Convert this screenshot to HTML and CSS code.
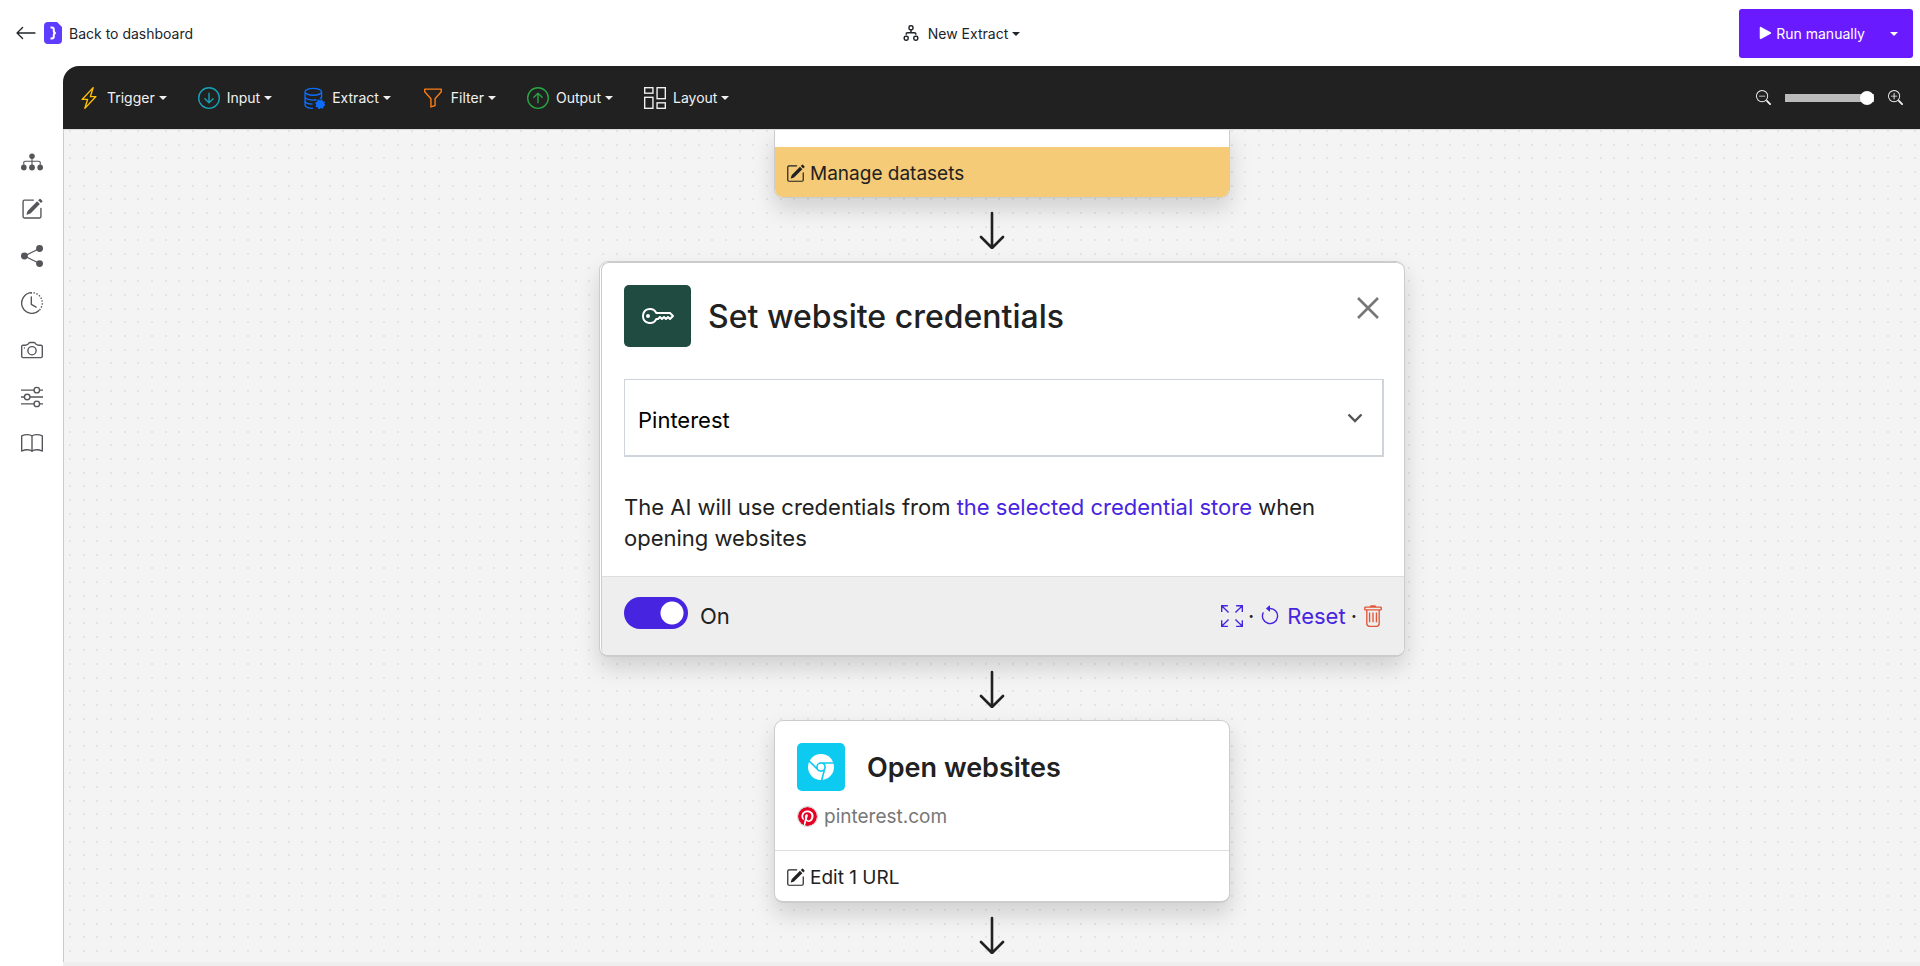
FILE: index.html
```html
<!DOCTYPE html>
<html lang="en">
<head>
    <meta charset="UTF-8">
    <meta name="viewport" content="width=device-width, initial-scale=1.0">
    <title>New Extract</title>
    <link rel="stylesheet" href="styles.css">
</head>
<body>
    <!-- Icon sprite -->
    <svg class="sprite" aria-hidden="true">
        <symbol id="i-back" viewBox="0 0 16 16"><path d="M15 8a.5.5 0 0 0-.5-.5H2.707l3.147-3.146a.5.5 0 1 0-.708-.708l-4 4a.5.5 0 0 0 0 .708l4 4a.5.5 0 0 0 .708-.708L2.707 8.5H14.5A.5.5 0 0 0 15 8"/></symbol>
        <symbol id="i-pencil" viewBox="0 0 16 16"><path d="M15.502 1.94a.5.5 0 0 1 0 .706L14.459 3.69l-2-2L13.502.646a.5.5 0 0 1 .707 0l1.293 1.293zm-1.75 2.456-2-2L4.939 9.21a.5.5 0 0 0-.121.196l-.805 2.414a.25.25 0 0 0 .316.316l2.414-.805a.5.5 0 0 0 .196-.12l6.813-6.814z"/><path d="M1 13.5A1.5 1.5 0 0 0 2.5 15h11a1.5 1.5 0 0 0 1.5-1.5v-6a.5.5 0 0 0-1 0v6a.5.5 0 0 1-.5.5h-11a.5.5 0 0 1-.5-.5v-11a.5.5 0 0 1 .5-.5H9a.5.5 0 0 0 0-1H2.5A1.5 1.5 0 0 0 1 2.5z"/></symbol>
        <symbol id="i-lightning" viewBox="0 0 16 16"><path d="M11.251.068a.5.5 0 0 1 .227.58L9.677 6.5H13a.5.5 0 0 1 .364.843l-8 8.5a.5.5 0 0 1-.842-.49L6.323 9.5H3a.5.5 0 0 1-.364-.843l8-8.5a.5.5 0 0 1 .615-.09zM4.157 8.5H7a.5.5 0 0 1 .478.647L6.11 13.59l5.732-6.09H9a.5.5 0 0 1-.478-.647L9.89 2.41z"/></symbol>
        <symbol id="i-down-circle" viewBox="0 0 16 16"><path d="M1 8a7 7 0 1 0 14 0A7 7 0 0 0 1 8m15 0A8 8 0 1 1 0 8a8 8 0 0 1 16 0M8.5 4.5a.5.5 0 0 0-1 0v5.793L5.354 8.146a.5.5 0 1 0-.708.708l3 3a.5.5 0 0 0 .708 0l3-3a.5.5 0 0 0-.708-.708L8.5 10.293z"/></symbol>
        <symbol id="i-up-circle" viewBox="0 0 16 16"><path d="M1 8a7 7 0 1 0 14 0A7 7 0 0 0 1 8m15 0A8 8 0 1 1 0 8a8 8 0 0 1 16 0M8.5 11.5a.5.5 0 0 1-1 0V5.707L5.354 7.854a.5.5 0 1 1-.708-.708l3-3a.5.5 0 0 1 .708 0l3 3a.5.5 0 0 1-.708.708L8.5 5.707z"/></symbol>
        <symbol id="i-database" viewBox="0 0 16 16"><g fill="none" stroke="currentColor"><path d="M13.500 4v4M1.500 4v9c0 1.300 2.500 2.300 5.800 2.500M1.500 7c0 1.400 2.700 2.500 6 2.500.8 0 1.600-.1 2.300-.2M1.500 10c0 1.400 2.500 2.400 5.500 2.500M13.500 7c0 .6-.5 1.100-1.200 1.500"/><ellipse cx="7.500" cy="3.500" rx="6" ry="2.500"/></g><circle cx="12.500" cy="12.500" r="2.900"/><circle cx="12.500" cy="12.500" r="3" fill="none" stroke="currentColor" stroke-width="1.200" stroke-dasharray="1.180 1.180"/></symbol>
        <symbol id="i-funnel" viewBox="0 0 16 16"><path d="M1.500 1.500A.5.5 0 0 1 2 1h12a.5.5 0 0 1 .5.5v2a.5.5 0 0 1-.128.334L10 8.692V13.500a.5.5 0 0 1-.342.474l-3 1A.5.5 0 0 1 6 14.500V8.692L1.628 3.834A.5.5 0 0 1 1.500 3.500zm1 .5v1.308l4.372 4.858A.5.5 0 0 1 7 8.500v5.306l2-.666V8.500a.5.5 0 0 1 .128-.334L13.500 3.308V2z"/></symbol>
        <symbol id="i-layout" viewBox="0 0 16 16"><g fill="none" stroke="currentColor"><rect x=".5" y=".5" width="6" height="4"/><rect x="9.500" y=".5" width="6" height="8"/><rect x=".5" y="7.500" width="6" height="8"/><rect x="9.500" y="11.500" width="6" height="4"/></g></symbol>
        <symbol id="i-flow" viewBox="0 0 16 16"><g fill="none" stroke="currentColor" stroke-width="1.500"><rect x="6" y=".8" width="4" height="4" rx="1.600"/><path d="M8 4.800v3M3.200 9.800V9a1.200 1.200 0 0 1 1.200-1.200h7.200A1.200 1.200 0 0 1 12.800 9v.8"/><rect x="1.200" y="11.200" width="4" height="4" rx="1.600"/><rect x="10.800" y="11.200" width="4" height="4" rx="1.600"/></g></symbol>
        <symbol id="i-play" viewBox="0 0 16 16"><path d="M2 1.900v12.200c0 .8.8 1.200 1.500.8l11-6.100a.9.9 0 0 0 0-1.600L3.500 1.100c-.7-.4-1.500 0-1.500.8z"/></symbol>
        <symbol id="i-zoom-out" viewBox="0 0 16 16"><path d="M6.500 12a5.500 5.500 0 1 0 0-11 5.500 5.500 0 0 0 0 11M13 6.500a6.500 6.500 0 1 1-13 0 6.500 6.500 0 0 1 13 0"/><path d="M10.344 11.742q.044.060.098.115l3.850 3.850a1 1 0 0 0 1.415-1.414l-3.850-3.850a1 1 0 0 0-.115-.1 6.500 6.500 0 0 1-1.398 1.400zM3.500 6h6a.5.5 0 0 1 0 1h-6a.5.5 0 0 1 0-1"/></symbol>
        <symbol id="i-zoom-in" viewBox="0 0 16 16"><path d="M6.500 12a5.500 5.500 0 1 0 0-11 5.500 5.500 0 0 0 0 11M13 6.500a6.500 6.500 0 1 1-13 0 6.500 6.500 0 0 1 13 0"/><path d="M10.344 11.742q.044.060.098.115l3.850 3.850a1 1 0 0 0 1.415-1.414l-3.850-3.850a1 1 0 0 0-.115-.1 6.500 6.500 0 0 1-1.398 1.400zM6.500 3a.5.5 0 0 1 .5.5V6h2.500a.5.5 0 0 1 0 1H7v2.500a.5.5 0 0 1-1 0V7H3.500a.5.5 0 0 1 0-1H6V3.500a.5.5 0 0 1 .5-.5"/></symbol>
        <symbol id="i-sitemap" viewBox="0 0 16 16"><circle cx="8" cy="3.800" r="2"/><circle cx="2" cy="12" r="2.100"/><circle cx="8" cy="12" r="2.100"/><circle cx="14" cy="12" r="2.100"/><path d="M8 4v8M2 10V8.500A1 1 0 0 1 3 7.500h10a1 1 0 0 1 1 1V10" fill="none" stroke="currentColor" stroke-width=".8"/></symbol>
        <symbol id="i-share" viewBox="0 0 16 16"><circle cx="13.500" cy="2.500" r="2.500"/><circle cx="2.500" cy="8" r="2.500"/><circle cx="13.500" cy="13.500" r="2.500"/><path d="M13.500 2.500 2.500 8l11 5.500" fill="none" stroke="currentColor" stroke-width=".9"/></symbol>
        <symbol id="i-clock" viewBox="0 0 16 16"><g fill="none" stroke="currentColor"><path d="M8 .5a7.500 7.500 0 1 0 5.300 12.800"/><path d="M8 .5a7.500 7.500 0 0 1 5.300 12.800" stroke-dasharray="1 1.150" stroke-dashoffset="-1.100"/><path d="M7.500 3.500V9l3.500 2" stroke-linecap="round" stroke-linejoin="round"/></g></symbol>
        <symbol id="i-camera" viewBox="0 0 16 16"><g fill="none" stroke="currentColor"><path d="M15.500 12.500a1 1 0 0 1-1 1h-13a1 1 0 0 1-1-1v-7a1 1 0 0 1 1-1h1.700c.7 0 1.300-.3 1.800-.7l.8-.9c.2-.2.400-.4.700-.4h3c.3 0 .5.200.7.400l.8.9c.5.400 1.100.7 1.800.7h1.700a1 1 0 0 1 1 1z"/><circle cx="8" cy="8.500" r="3"/></g><circle cx="2.500" cy="6.500" r=".5"/></symbol>
        <symbol id="i-sliders" viewBox="0 0 16 16"><g fill="none" stroke="currentColor"><path d="M0 3h9.500M13.500 3H16M0 8h2.500M6.500 8H16M0 13h9.500M13.500 13H16"/><circle cx="11.500" cy="3" r="2"/><circle cx="4.500" cy="8" r="2"/><circle cx="11.500" cy="13" r="2"/></g></symbol>
        <symbol id="i-book" viewBox="0 0 16 16"><path d="M8 2.200v11M8 2.200C6.500.7 3 1 .5 2.100v11c2.500-1.100 6-1.400 7.500.1 1.500-1.500 5-1.200 7.500-.1v-11C13 1 9.500.7 8 2.200z" fill="none" stroke="currentColor" stroke-linejoin="round"/></symbol>
        <symbol id="i-key" viewBox="0 0 16 16"><path d="M0 8a4 4 0 0 1 7.465-2H14a.5.5 0 0 1 .354.146l1.500 1.500a.5.5 0 0 1 0 .708l-1.500 1.500a.5.5 0 0 1-.708 0L13 9.207l-.646.647a.5.5 0 0 1-.708 0L11 9.207l-.646.647a.5.5 0 0 1-.708 0L9 9.207l-.646.647A.5.5 0 0 1 8 10h-.535A4 4 0 0 1 0 8m4-3a3 3 0 1 0 2.712 4.285A.5.5 0 0 1 7.163 9h.63l.853-.854a.5.5 0 0 1 .708 0l.646.647.646-.647a.5.5 0 0 1 .708 0l.646.647.646-.647a.5.5 0 0 1 .708 0l.646.647.793-.793-1-1h-6.630a.5.5 0 0 1-.451-.285A3 3 0 0 0 4 5"/><path d="M4 8a1 1 0 1 1-2 0 1 1 0 0 1 2 0"/></symbol>
        <symbol id="i-expand" viewBox="0 0 16 16"><path d="M.5 5V.5H5M.5.5l5 5M11 .5h4.500V5M15.500.5l-5 5M.5 11v4.500H5M.5 15.500l5-5M11 15.500h4.500V11M15.500 15.500l-5-5" fill="none" stroke="currentColor"/></symbol>
        <symbol id="i-reset" viewBox="0 0 16 16"><path d="M8 3a5 5 0 1 1-4.546 2.914.5.5 0 0 0-.908-.417A6 6 0 1 0 8 2z"/><path d="M8 4.466V.534a.25.25 0 0 0-.41-.192L5.230 2.308a.25.25 0 0 0 0 .384l2.360 1.966A.25.25 0 0 0 8 4.466"/></symbol>
        <symbol id="i-trash" viewBox="0 0 16 16"><g fill="none" stroke="currentColor"><path d="M2.500 1.500h11a.5.5 0 0 1 .5.5v1a.5.5 0 0 1-.5.5h-11A.5.5 0 0 1 2 3V2a.5.5 0 0 1 .5-.5zM6 1.500a.8.8 0 0 1 .8-.9h2.400a.8.8 0 0 1 .8.900M3.500 4v9.500a2 2 0 0 0 2 2h5a2 2 0 0 0 2-2V4M5.500 5.500v7M8 5.500v7M10.500 5.500v7"/></g></symbol>
        <symbol id="i-chrome" viewBox="0 0 16 16"><path d="M16 8a8 8 0 0 1-7.022 7.940l1.902-7.098a3 3 0 0 0 .05-1.492A3 3 0 0 0 10.237 6h5.511A8 8 0 0 1 16 8M0 8a8 8 0 0 0 7.927 8l1.426-5.321a3 3 0 0 1-.723.255 3 3 0 0 1-1.743-.147 3 3 0 0 1-1.043-.7L.633 4.876A8 8 0 0 0 0 8m5.004-.167L1.108 3.936A8.003 8.003 0 0 1 15.418 5H8.066a3 3 0 0 0-1.252.243 2.990 2.990 0 0 0-1.810 2.590M8 10a2 2 0 1 0 0-4 2 2 0 0 0 0 4"/></symbol>
        <symbol id="i-pinterest" viewBox="0 0 16 16"><path d="M8 0a8 8 0 0 0-2.915 15.452c-.07-.633-.134-1.606.027-2.297.146-.625.938-3.977.938-3.977s-.239-.479-.239-1.187c0-1.113.645-1.943 1.448-1.943.682 0 1.012.512 1.012 1.127 0 .686-.437 1.712-.663 2.663-.188.796.4 1.446 1.185 1.446 1.422 0 2.515-1.500 2.515-3.664 0-1.915-1.377-3.254-3.342-3.254-2.276 0-3.612 1.707-3.612 3.471 0 .688.265 1.425.595 1.826a.24.24 0 0 1 .056.230c-.061.252-.196.796-.222.907-.035.146-.116.177-.268.107-1-.465-1.624-1.926-1.624-3.100 0-2.523 1.834-4.840 5.286-4.840 2.775 0 4.932 1.977 4.932 4.620 0 2.757-1.739 4.976-4.151 4.976-.811 0-1.573-.421-1.834-.919l-.498 1.902c-.181.695-.669 1.566-.995 2.097A8 8 0 1 0 8 0"/></symbol>
        <symbol id="i-close" viewBox="0 0 22 22"><path d="M1 1l20 20M21 1 1 21" fill="none" stroke="currentColor" stroke-width="2.600"/></symbol>
        <symbol id="i-arrow" viewBox="0 0 26 38"><path d="M13 2V37M2 26l11 11 11-11" fill="none" stroke="currentColor" stroke-width="2.600" stroke-linecap="round" stroke-linejoin="round"/></symbol>
    </svg>

    <header class="topbar">
        <a class="back" href="#">
            <svg class="back-arrow"><use href="#i-back"/></svg>
            <svg class="logo" viewBox="0 0 18 22"><path d="M4 0h9l5 5v13a4 4 0 0 1-4 4H4a4 4 0 0 1-4-4V4a4 4 0 0 1 4-4z" fill="#5f3dff"/><path d="M6.500 5.500h1.300a2 2 0 0 1 2 2v1.500a2 2 0 0 0 2 2 2 2 0 0 0-2 2v1.500a2 2 0 0 1-2 2H6.500" fill="none" stroke="#fff" stroke-width="2"/></svg>
            Back to dashboard
        </a>
        <button class="title-menu"><svg class="icon-16"><use href="#i-flow"/></svg><span class="caret">New Extract</span></button>
        <div class="run">
            <button class="run-main"><svg class="run-icon"><use href="#i-play"/></svg>Run manually</button>
            <button class="run-more caret" aria-label="More run options"></button>
        </div>
    </header>

    <div class="workspace">
        <nav class="sidebar">
            <a href="#" aria-label="Workflow"><svg><use href="#i-sitemap"/></svg></a>
            <a href="#" aria-label="Edit"><svg><use href="#i-pencil"/></svg></a>
            <a href="#" aria-label="Share"><svg><use href="#i-share"/></svg></a>
            <a href="#" aria-label="History"><svg><use href="#i-clock"/></svg></a>
            <a href="#" aria-label="Screenshots"><svg><use href="#i-camera"/></svg></a>
            <a href="#" aria-label="Settings"><svg><use href="#i-sliders"/></svg></a>
            <a href="#" aria-label="Docs"><svg><use href="#i-book"/></svg></a>
        </nav>

        <main class="editor">
            <div class="toolbar">
                <button class="tool"><svg class="yellow"><use href="#i-lightning"/></svg><span class="caret">Trigger</span></button>
                <button class="tool"><svg class="teal"><use href="#i-down-circle"/></svg><span class="caret">Input</span></button>
                <button class="tool"><svg class="blue"><use href="#i-database"/></svg><span class="caret">Extract</span></button>
                <button class="tool"><svg class="orange"><use href="#i-funnel"/></svg><span class="caret">Filter</span></button>
                <button class="tool"><svg class="green"><use href="#i-up-circle"/></svg><span class="caret">Output</span></button>
                <button class="tool"><svg><use href="#i-layout"/></svg><span class="caret">Layout</span></button>
                <div class="zoom">
                    <button aria-label="Zoom out"><svg><use href="#i-zoom-out"/></svg></button>
                    <input type="range" min="0" max="100" value="100" aria-label="Zoom">
                    <button aria-label="Zoom in"><svg><use href="#i-zoom-in"/></svg></button>
                </div>
            </div>

            <div class="canvas">
                <section class="card card-clipped">
                    <div class="card-spacer"></div>
                    <button class="card-action highlight"><svg><use href="#i-pencil"/></svg>Manage datasets</button>
                </section>

                <svg class="arrow"><use href="#i-arrow"/></svg>

                <section class="card card-active">
                    <div class="card-inner">
                        <div class="active-body">
                            <div class="active-head">
                                <span class="tile tile-key"><svg><use href="#i-key"/></svg></span>
                                <h2>Set website credentials</h2>
                                <button class="close" aria-label="Close"><svg><use href="#i-close"/></svg></button>
                            </div>
                            <select class="store" aria-label="Credential store">
                                <option>Pinterest</option>
                            </select>
                            <p>The AI will use credentials from <a href="#">the selected credential store</a> when opening websites</p>
                        </div>
                        <div class="active-foot">
                            <input class="switch" type="checkbox" id="enabled" checked>
                            <label for="enabled">On</label>
                            <div class="actions">
                                <a href="#" aria-label="Expand"><svg><use href="#i-expand"/></svg></a>
                                <span>·</span>
                                <a href="#"><svg><use href="#i-reset"/></svg>Reset</a>
                                <span>·</span>
                                <a class="danger" href="#" aria-label="Delete"><svg><use href="#i-trash"/></svg></a>
                            </div>
                        </div>
                    </div>
                </section>

                <svg class="arrow"><use href="#i-arrow"/></svg>

                <section class="card">
                    <div class="card-body">
                        <div class="card-head">
                            <span class="tile tile-chrome"><svg><use href="#i-chrome"/></svg></span>
                            <h3>Open websites</h3>
                        </div>
                        <div class="site"><svg><use href="#i-pinterest"/></svg>pinterest.com</div>
                    </div>
                    <button class="card-action"><svg><use href="#i-pencil"/></svg>Edit 1 URL</button>
                </section>

                <svg class="arrow"><use href="#i-arrow"/></svg>
            </div>
        </main>
    </div>
</body>
</html>
```

FILE: styles.css
```css
* {
    box-sizing: border-box;
}

body {
    font-family: Inter, "Liberation Sans", sans-serif;
    font-size: 14px;
    color: #212529;
    background: #fff;
    margin: 0;
    height: 100vh;
    display: flex;
    flex-direction: column;
    overflow: hidden;
}

button, select {
    font: inherit;
    color: inherit;
    background: none;
    border: 0;
    padding: 0;
    cursor: pointer;
}

a {
    color: #4725e0;
    text-decoration: none;
}

svg {
    display: block;
    flex: none;
    fill: currentColor;
}

.sprite {
    position: absolute;
    width: 0;
    height: 0;
}

.caret::after {
    content: "";
    display: inline-block;
    margin-left: 4px;
    vertical-align: 3px;
    border: 4px solid transparent;
    border-top-color: currentColor;
    border-bottom: 0;
}

/* Top bar */
.topbar {
    display: grid;
    grid-template-columns: 1fr auto 1fr;
    align-items: center;
    height: 66px;
    padding: 0 7px 0 15px;
    flex: none;
}

.back {
    display: flex;
    align-items: center;
    color: #212529;
}

.back-arrow {
    width: 22px;
    height: 22px;
}

.logo {
    width: 18px;
    height: 22px;
    margin: 0 7px;
}

.title-menu {
    display: flex;
    align-items: center;
    gap: 9px;
    padding-right: 5px;
}

.icon-16 {
    width: 16px;
    height: 16px;
}

.run {
    display: flex;
    justify-self: end;
    height: 49px;
    border-radius: 3px;
    background: #6a1aff;
    color: #fff;
}

.run-main {
    display: flex;
    align-items: center;
    gap: 4px;
    padding: 0 10px 0 19px;
}

.run-icon {
    width: 14px;
    height: 14px;
}

.run-more {
    width: 38px;
}

.run-more::after {
    margin-left: 0;
}

/* Workspace */
.workspace {
    display: flex;
    flex: 1;
    min-height: 0;
}

.sidebar {
    display: flex;
    flex-direction: column;
    align-items: center;
    gap: 25px;
    width: 64px;
    padding-top: 85px;
    margin-right: -1px;
    flex: none;
}

.sidebar a {
    color: #55565a;
}

.sidebar svg {
    width: 22px;
    height: 22px;
}

.editor {
    display: flex;
    flex-direction: column;
    flex: 1;
    min-width: 0;
    border-bottom: 4px solid #eee;
}

.toolbar {
    display: flex;
    align-items: center;
    gap: 31px;
    height: 63px;
    padding: 0 17px 0 15px;
    border-top-left-radius: 16px;
    background: #212121;
    color: #f1f1f1;
    flex: none;
}

.tool {
    display: flex;
    align-items: center;
    gap: 7px;
}

.tool svg {
    width: 22px;
    height: 22px;
}

.yellow { color: #ffc107; }
.teal { color: #17a2b8; }
.blue { color: #0d6efd; }
.orange { color: #fd7e14; }
.green { color: #28a745; }

.zoom {
    display: flex;
    align-items: center;
    gap: 14px;
    margin-left: auto;
}

.zoom svg {
    width: 15px;
    height: 15px;
}

.zoom input {
    appearance: none;
    width: 89px;
    height: 8px;
    margin: 0;
    background: #bbb;
}

.zoom input::-webkit-slider-thumb {
    appearance: none;
    width: 14px;
    height: 14px;
    border-radius: 50%;
    background: #fff;
}

/* Canvas with dotted grid */
.canvas {
    display: flex;
    flex-direction: column;
    align-items: center;
    flex: 1;
    min-height: 0;
    overflow: hidden;
    border-left: 1px solid #ccc;
    border-top: 1px solid #ddd;
    background: #f4f4f4 url("data:image/svg+xml,%3Csvg xmlns='http://www.w3.org/2000/svg' width='41' height='41' fill='%23e4e4e4'%3E%3Cpath d='M5 0h2v2H5zM19 0h2v2h-2zM32 0h2v2h-2zM5 14h2v2H5zM19 14h2v2h-2zM32 14h2v2h-2zM5 27h2v2H5zM19 27h2v2h-2zM32 27h2v2h-2z'/%3E%3C/svg%3E");
}

.arrow {
    width: 26px;
    height: 38px;
    margin: 13px 0 12px;
    color: #212121;
}

.card {
    width: 456px;
    margin-left: 20px;
    border: 1px solid #ccc;
    border-bottom-width: 2px;
    border-radius: 9px;
    background: #fff;
    box-shadow: 0 11px 22px rgba(0, 0, 0, 0.15);
    overflow: hidden;
    flex: none;
}

.card-clipped {
    border-top: 0;
    border-bottom-width: 1px;
    border-radius: 0 0 9px 9px;
}

.card-spacer {
    height: 17px;
}

.card-action {
    display: flex;
    align-items: center;
    gap: 5px;
    width: 100%;
    height: 51px;
    padding: 2px 11px 0;
    font-size: 19px;
    color: #212121;
    border-top: 1px solid #ddd;
}

.card-action svg {
    width: 19px;
    height: 19px;
}

.highlight {
    height: 50px;
    border-top: 0;
    background: #f5cb77;
}

.card-body {
    padding: 22px;
}

.card-head {
    display: flex;
    align-items: center;
    gap: 22px;
}

.tile {
    display: flex;
    align-items: center;
    justify-content: center;
    border-radius: 5px;
    color: #fff;
}

.tile-chrome {
    width: 48px;
    height: 48px;
    background: #0dcaf0;
}

.tile-chrome svg {
    width: 26px;
    height: 26px;
}

h2, h3, p {
    margin: 0;
    color: #212121;
}

h2 {
    font-size: 32px;
    font-weight: 500;
}

h3 {
    font-size: 27px;
    font-weight: 600;
}

.site {
    display: flex;
    align-items: center;
    gap: 6px;
    margin-top: 14px;
    font-size: 19px;
    line-height: 23px;
    color: #777;
}

.site svg {
    width: 21px;
    height: 21px;
    border: 1px solid #ccc;
    border-radius: 50%;
    color: #e60023;
}

/* Active card */
.card-active {
    width: 806px;
    padding-left: 1px;
    font-size: 22px;
}

.card-inner {
    border: 1px solid #ccc;
    border-right: 0;
    border-bottom: 0;
    border-radius: 8px 8px 7px 7px;
    overflow: hidden;
}

.active-body {
    padding: 22px 20px 22px 22px;
}

.active-head {
    display: flex;
    align-items: center;
    gap: 17px;
}

.tile-key {
    width: 67px;
    height: 62px;
    background: #1f4b40;
}

.tile-key svg {
    width: 32px;
    height: 32px;
}

.close {
    align-self: flex-start;
    margin: 12px 5px 0 auto;
    color: #777;
}

.close svg {
    width: 22px;
    height: 22px;
}

.store {
    appearance: none;
    display: block;
    width: 100%;
    height: 78px;
    margin: 32px 0 35px;
    padding: 4px 13px 0;
    border: solid #ced4da;
    border-width: 1px 2px 2px 1px;
    color: #000;
    background: #fff url("data:image/svg+xml,%3Csvg xmlns='http://www.w3.org/2000/svg' width='16' height='10' fill='none' stroke='%23555' stroke-width='2.4'%3E%3Cpath d='M1.500 1.500 8 8l6.500-6.500'/%3E%3C/svg%3E") no-repeat right 19px center;
}

.active-body p {
    line-height: 31px;
}

.active-foot {
    display: flex;
    align-items: center;
    height: 79px;
    padding: 0 20px 0 22px;
    border-top: 1px solid #ddd;
    background: #eee;
    color: #212121;
}

.switch {
    appearance: none;
    width: 64px;
    height: 32px;
    margin: 0 12px 6px 0;
    border-radius: 16px;
    background: #4725e0 radial-gradient(circle at 48px 16px, #fff 11px, transparent 12px);
    cursor: pointer;
}

.actions {
    display: flex;
    align-items: center;
    gap: 5px;
    margin-left: auto;
}

.actions a {
    display: flex;
    align-items: center;
    gap: 6px;
}

.actions svg {
    width: 22px;
    height: 22px;
}

.actions .danger {
    color: #e0583a;
}
```
